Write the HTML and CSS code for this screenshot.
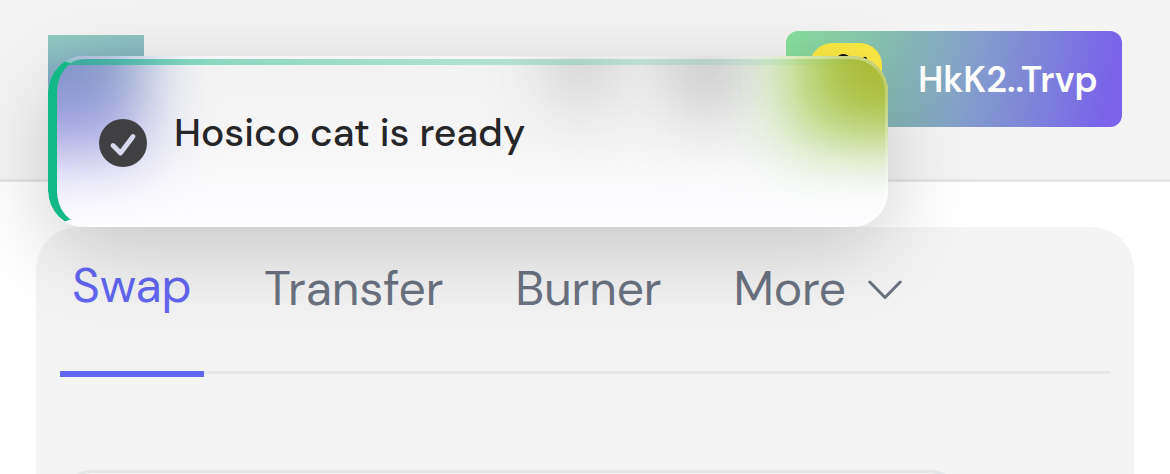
FILE: index.html
```html
<!DOCTYPE html>
<html lang="en">
<head>
  <meta charset="UTF-8">
  <meta name="viewport" content="width=device-width, initial-scale=1.0">
  <title>Swap</title>
  <link rel="stylesheet" href="styles.css">
</head>
<body>
  <header class="header">
    <div class="logo"></div>
    <button class="wallet-button">
      <svg class="wallet-avatar" viewBox="0 0 72 72" width="72" height="72">
        <rect width="72" height="72" rx="22" fill="#fdeb44"/>
        <path d="M26 15 Q33 7 41 15 Z" fill="#111"/>
        <circle cx="55" cy="15.5" r="1.8" fill="#111"/>
      </svg>
      <span class="wallet-address">HkK2..Trvp</span>
    </button>
  </header>

  <main class="card">
    <nav class="tabs">
      <a class="tab tab-active">Swap</a>
      <a class="tab">Transfer</a>
      <a class="tab">Burner</a>
      <a class="tab">
        More
        <svg class="chevron" viewBox="0 0 36 20" width="36" height="20" fill="none">
          <path d="M2.8 2 L18 17.5 L33.2 2" stroke="#6b7280" stroke-width="3" stroke-linecap="round" stroke-linejoin="round"/>
        </svg>
      </a>
    </nav>
    <div class="swap-box"></div>
  </main>

  <div class="toast">
    <div class="glow glow-gray-left"></div>
    <div class="glow glow-gray-right"></div>
    <div class="glow glow-blue"></div>
    <div class="glow glow-green"></div>
    <div class="glow glow-yellow"></div>
    <svg class="toast-icon" viewBox="0 0 48 48" width="48" height="48" fill="none">
      <circle cx="24" cy="24" r="24" fill="#404043"/>
      <path d="M14 26.5 L21.5 34 L34 17.5" stroke="#d9d9ee" stroke-width="4.8" stroke-linecap="round" stroke-linejoin="round"/>
    </svg>
    <span class="toast-text">Hosico cat is ready</span>
  </div>
</body>
</html>
```

FILE: styles.css
```css
* {
  box-sizing: border-box;
}

body {
  margin: 0;
  height: 474px;
  overflow: hidden;
  background: #fff;
  font-family: "DM Sans", Inter, sans-serif;
}

.header {
  display: flex;
  justify-content: space-between;
  align-items: flex-start;
  height: 182px;
  padding: 31px 48px 0;
  background: #f4f4f4;
  border-bottom: 3px solid #e5e6e9;
}

.logo {
  width: 96px;
  height: 96px;
  margin-top: 4px;
  background: linear-gradient(175deg, #91ccc0 0%, #86b1c6 35%, #839fca 50%, #7b62ea 100%);
}

.wallet-button {
  display: flex;
  align-items: center;
  width: 336px;
  height: 96px;
  padding: 0 24px;
  border: none;
  border-radius: 12px;
  background: linear-gradient(100deg, #8ae29c 0%, #86b8b6 35%, #839fca 54%, #7d7fdc 77%, #7a62ea 95%);
}

.wallet-avatar {
  flex: none;
}

.wallet-address {
  margin-left: 36px;
  font-family: "DM Sans", Inter, sans-serif;
  font-size: 36px;
  font-weight: 600;
  color: #fff;
}

.card {
  width: 1098px;
  height: 247px;
  margin: 45px 0 0 36px;
  padding: 0 24px;
  overflow: hidden;
  border-radius: 42px 42px 0 0;
  background: #f4f4f4;
}

.tabs {
  display: flex;
  width: 1050px;
  height: 147px;
  margin-bottom: 96px;
  border-bottom: 3px solid #e5e7eb;
}

.tab {
  display: flex;
  align-items: flex-start;
  height: 150px;
  padding: 33px 12px 0;
  margin-right: 48px;
  font-size: 48px;
  line-height: 58px;
  letter-spacing: -0.1px;
  color: #6b7280;
}

.tab-active {
  width: 144px;
  padding-top: 30px;
  border-bottom: 6px solid #6366f1;
  color: #6366f1;
}

.chevron {
  margin: 20px 0 0 21px;
}

.swap-box {
  width: 902px;
  height: 80px;
  border: 3px solid #e5e6e8;
  border-radius: 32px;
}

.toast {
  position: absolute;
  top: 56px;
  left: 48px;
  display: flex;
  align-items: flex-start;
  width: 840px;
  height: 171px;
  padding: 63px 51px 0;
  overflow: hidden;
  border-radius: 36px;
  background: linear-gradient(180deg, #f3f3f3 0%, #f6f6f7 50%, #fbfbfd 80%, #fdfdff 100%);
  box-shadow: 0 24px 88px rgba(0, 0, 0, 0.19);
}

/* fading accent line along the top edge */
.toast::before {
  content: "";
  position: absolute;
  z-index: 1;
  top: 3px;
  left: 9px;
  right: 3px;
  height: 6px;
  border-radius: 30px 33px 0 0 / 6px 6px 0 0;
  background: linear-gradient(90deg, rgba(18, 184, 134, 0.65) 0%, rgba(18, 184, 134, 0.45) 20%, rgba(18, 184, 134, 0.25) 60%, rgba(18, 184, 134, 0) 100%);
}

.toast::after {
  content: "";
  position: absolute;
  inset: 0;
  z-index: 2;
  border: 3px solid rgba(255, 255, 255, 0.25);
  border-top-color: rgba(255, 255, 255, 0.35);
  border-left: 9px solid #12b886;
  border-radius: 36px;
}

/* soft colors of the header showing through the glass */
.glow {
  position: absolute;
  top: -120px;
  filter: blur(32px);
}

.glow-blue {
  left: -120px;
  width: 215px;
  height: 222px;
  background: linear-gradient(180deg, #7f97c4 0%, #7f97c4 62%, #9d9ce0 82%, #b9b3f4 100%);
}

.glow-gray-left {
  left: 500px;
  width: 66px;
  height: 172px;
  background: #d0d0d1;
}

.glow-gray-right {
  left: 622px;
  width: 72px;
  height: 178px;
  background: #c6c6c8;
}

.glow-green {
  left: 733px;
  width: 240px;
  height: 205px;
  background: #c0e8a2;
}

.glow-yellow {
  left: 768px;
  width: 150px;
  height: 188px;
  background: #aab832;
}

.toast-icon {
  position: relative;
  flex: none;
}

.toast-text {
  position: relative;
  margin: -9px 0 0 27px;
  font-size: 39px;
  font-weight: 500;
  line-height: 46px;
  color: #262629;
  white-space: nowrap;
}
```
